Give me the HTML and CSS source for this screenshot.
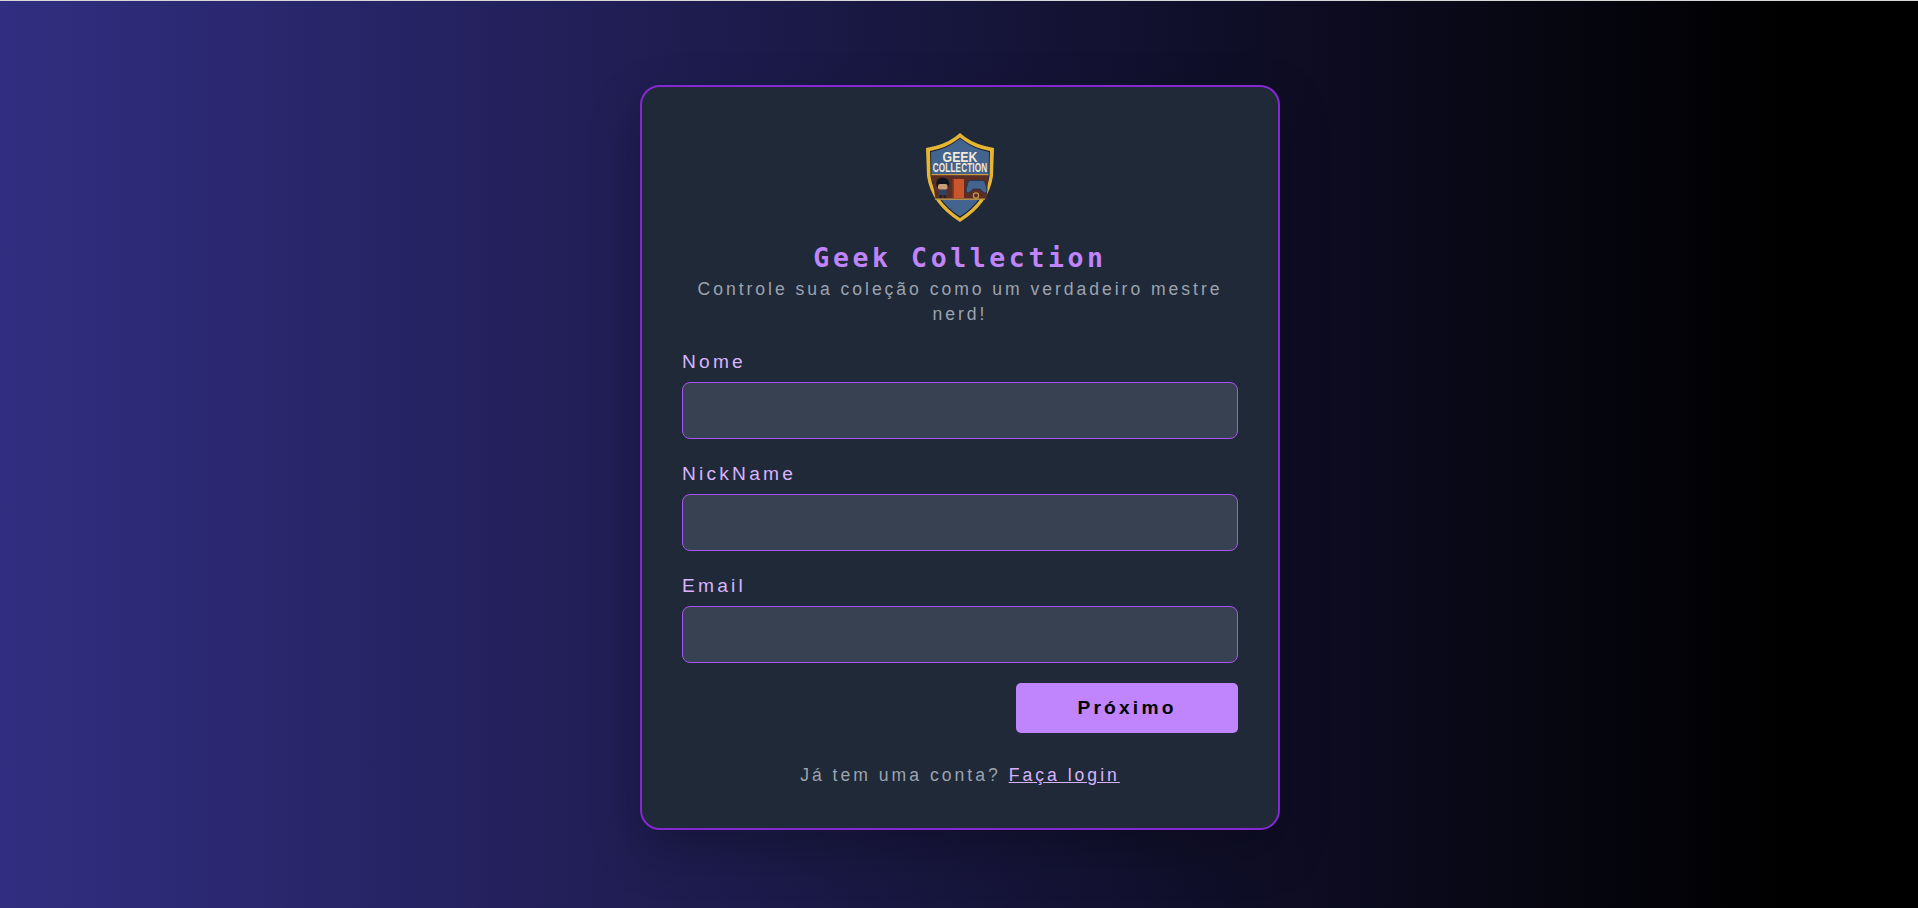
FILE: index.html
```html
<!DOCTYPE html>
<html lang="pt-BR">
<head>
    <meta charset="UTF-8">
    <meta name="viewport" content="width=device-width, initial-scale=1.0">
    <title>Geek Collection</title>
    <link rel="stylesheet" href="styles.css">
</head>
<body>
    <div class="page">
        <div class="card">
            <div class="logo">
                <svg width="68" height="89" viewBox="0 0 68 89">
                    <path d="M34 0 L39 4 Q50 12 68 15 L67 43 Q63 71 34 89 Q5 71 1 43 L0 15 Q18 12 29 4 Z" fill="#e5b533"/>
                    <path d="M34 4.5 L38 7.5 Q49 15.5 64 18 L63.5 43 Q60 68 34 85 Q8 68 4.5 43 L4 18 Q19 15.5 30 7.5 Z" fill="#1c2433"/>
                    <path d="M34 5.5 L38 8.5 Q49 16.5 63 19 L62.5 43 Q59 67 34 83.5 Q9 67 5.5 43 L5 19 Q19 16.5 30 8.5 Z" fill="#43648f"/>
                    <path d="M5.5 42 H62.5 L60.5 66 H9.5 Z" fill="#5a2e24"/>
                    <rect x="5.5" y="41" width="57" height="1.2" fill="#c89a48"/>
                    <rect x="9" y="65.5" width="50" height="1.3" fill="#c89a48"/>
                    <ellipse cx="16.7" cy="50.5" rx="6.5" ry="6" fill="#10151f"/>
                    <rect x="12" y="51" width="9.5" height="5.5" rx="2" fill="#c79c78"/>
                    <rect x="13" y="57" width="7.5" height="5" fill="#2b4468"/>
                    <rect x="13.5" y="62" width="2.5" height="3" fill="#1c2433"/>
                    <rect x="17.5" y="62" width="2.5" height="3" fill="#1c2433"/>
                    <rect x="26.5" y="46" width="1.5" height="19" fill="#8a3a24"/>
                    <rect x="28" y="46" width="10" height="19" fill="#c9552c"/>
                    <path d="M42 49 Q44 46.5 47 47.5 H54 Q57 46.5 59 49 L61 57 Q60.5 61.5 57 59 L54 56 H47 L44 59 Q40.5 61.5 40 57 Z" fill="#43648f" stroke="#1c2f4d" stroke-width="0.7"/>
                    <circle cx="50" cy="62.5" r="2.6" fill="none" stroke="#c89a48" stroke-width="1.2"/>
                    <text class="logo-big" transform="translate(34 28.5) scale(0.82 1)" text-anchor="middle">GEEK</text>
                    <text class="logo-small" transform="translate(34 39) scale(0.68 1)" text-anchor="middle">COLLECTION</text>
                </svg>
            </div>
            <h1 class="title">Geek Collection</h1>
            <p class="subtitle">Controle sua coleção como um verdadeiro mestre nerd!</p>

            <form class="form">
                <div class="field">
                    <label class="field-label">Nome</label>
                    <input class="field-input" type="text">
                </div>
                <div class="field">
                    <label class="field-label">NickName</label>
                    <input class="field-input" type="text">
                </div>
                <div class="field">
                    <label class="field-label">Email</label>
                    <input class="field-input" type="email">
                </div>
                <div class="actions">
                    <button class="next" type="button">Próximo</button>
                </div>
            </form>

            <p class="login">Já tem uma conta? <a href="#">Faça login</a></p>
        </div>
    </div>
</body>
</html>
```

FILE: styles.css
```css
* { box-sizing: border-box; }

body {
    margin: 0;
    background-color: #000;
    font-family: "Liberation Sans", Arial, sans-serif;
}

.page {
    min-height: 908px;
    border-top: 1px solid #d8d8d8;
    background: linear-gradient(to right, #312e81, #000 93%);
    display: flex;
    justify-content: center;
    padding: 84px 0 0 2px;
}

.card {
    width: 640px;
    height: 745px;
    background-color: #1f2937;
    border: 2px solid #8628d2;
    border-radius: 20px;
    padding: 46px 40px 0;
    box-shadow: 0 20px 50px rgba(0, 0, 0, 0.25);
}

.logo {
    display: flex;
    justify-content: center;
    height: 89px;
}

.logo-big {
    font-family: "Liberation Sans", sans-serif;
    font-size: 15px;
    font-weight: bold;
    fill: #f3ead6;
}

.logo-small {
    font-family: "Liberation Sans", sans-serif;
    font-size: 12px;
    font-weight: bold;
    letter-spacing: 0.2px;
    fill: #f3ead6;
}

.title {
    margin: 20px 0 0;
    text-align: center;
    font-family: "DejaVu Sans Mono", monospace;
    font-size: 26.5px;
    line-height: 32px;
    font-weight: bold;
    letter-spacing: 3.6px;
    color: #c084fc;
}

.subtitle {
    margin: 3px 0 0;
    text-align: center;
    font-size: 17.6px;
    line-height: 24.5px;
    letter-spacing: 2.95px;
    color: #9ca3af;
}

.form { margin-top: 21px; }

.field { margin-bottom: 20px; }

.field-label {
    display: block;
    font-size: 19.2px;
    line-height: 29px;
    letter-spacing: 3.2px;
    margin-bottom: 6px;
    color: #d8b4fe;
}

.field-input {
    display: block;
    width: 100%;
    height: 57px;
    background-color: #374151;
    border: 1px solid #a855f7;
    border-radius: 8px;
    color: #fff;
}

.actions {
    display: flex;
    justify-content: flex-end;
}

.next {
    width: 222px;
    height: 50px;
    border: none;
    border-radius: 5px;
    background-color: #c084fc;
    color: #000;
    font-family: inherit;
    font-size: 19.2px;
    font-weight: bold;
    letter-spacing: 3.2px;
}

.login {
    margin: 30px 0 0;
    text-align: center;
    font-size: 17.6px;
    line-height: 24.6px;
    letter-spacing: 3px;
    color: #9ca3af;
}

.login a { color: #d8b4fe; }
```
